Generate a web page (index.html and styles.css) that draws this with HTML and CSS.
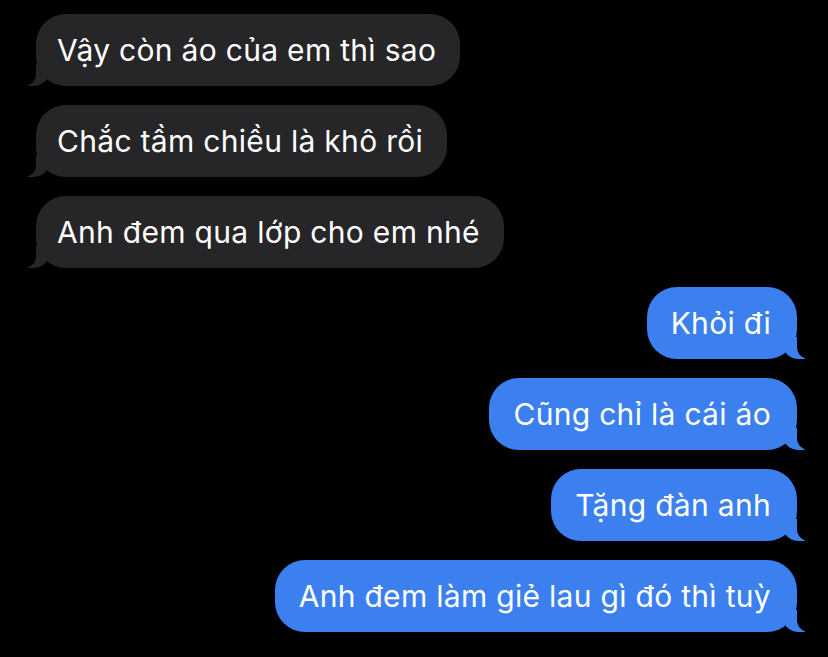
FILE: index.html
```html
<!DOCTYPE html>
<html lang="vi">
<head>
  <meta charset="UTF-8" />
  <meta name="viewport" content="width=device-width, initial-scale=1.0" />
  <title>Tin nhắn</title>
  <link rel="stylesheet" href="styles.css">
</head>
<body>
  <main class="thread">
    <div class="bubble in">Vậy còn áo của em thì sao</div>
    <div class="bubble in">Chắc tầm chiều là khô rồi</div>
    <div class="bubble in">Anh đem qua lớp cho em nhé</div>
    <div class="bubble out">Khỏi đi</div>
    <div class="bubble out">Cũng chỉ là cái áo</div>
    <div class="bubble out">Tặng đàn anh</div>
    <div class="bubble out">Anh đem làm giẻ lau gì đó thì tuỳ</div>
  </main>
</body>
</html>
```

FILE: styles.css
```css
body {
  margin: 0;
  background: #000;
  font-family: 'Inter', 'Roboto', sans-serif;
  color: #fff;
}
.thread {
  display: flex;
  flex-direction: column;
  gap: 19px;
  padding: 14px 31px 0 36px;
}
.bubble {
  position: relative;
  height: 72px;
  box-sizing: border-box;
  display: flex;
  align-items: center;
  font-size: 30px;
  letter-spacing: 0.3px;
  border-radius: 30px;
  white-space: nowrap;
}
.in {
  align-self: flex-start;
  padding: 0 24px 0 21px;
  background: #262628;
}
.out {
  align-self: flex-end;
  padding: 0 26px 0 24px;
  background: #3b80ee;
}
/* tails */
.bubble::before,
.bubble::after {
  content: "";
  position: absolute;
  bottom: 0;
  height: 22px;
}
.in::before {
  left: -9px;
  width: 22px;
  background: #262628;
  border-bottom-right-radius: 16px 14px;
}
.in::after {
  left: -24px;
  width: 24px;
  background: #000;
  border-bottom-right-radius: 12px;
}
.out::before {
  right: -8px;
  width: 22px;
  background: #3b80ee;
  border-bottom-left-radius: 16px 14px;
}
.out::after {
  right: -24px;
  width: 24px;
  background: #000;
  border-bottom-left-radius: 12px;
}
```
